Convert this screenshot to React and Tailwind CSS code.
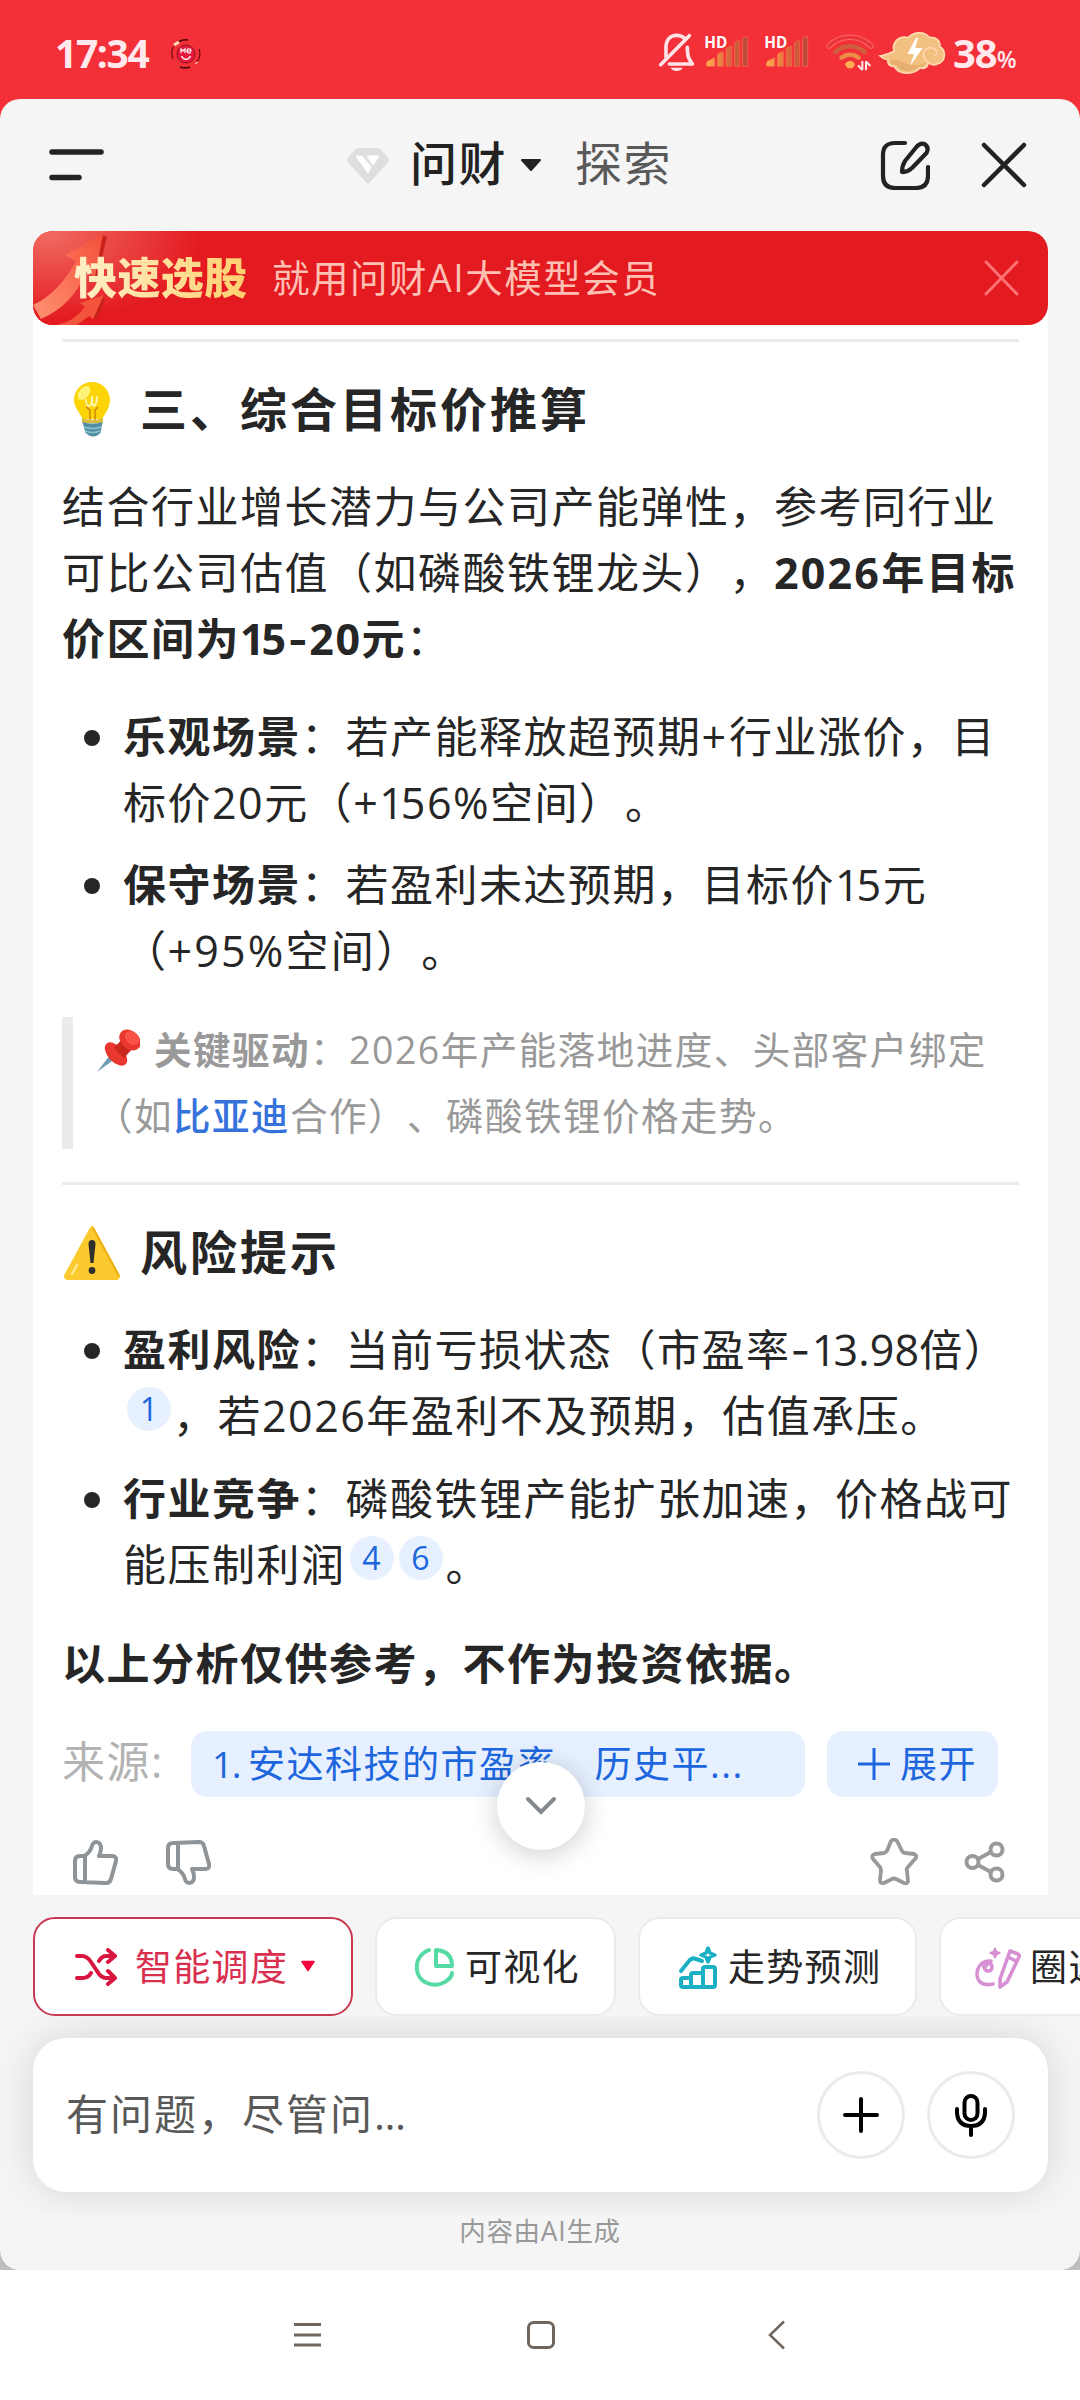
import React from "react";

const StatusBar = () => (
  <div className="flex h-[99px] items-start bg-[#f32f38] pt-5">
    <span className="ml-[55px] w-[95px] whitespace-nowrap text-[39px] font-bold leading-[65px] tracking-[-1.400px] text-[#ffe9ec]">
      17:34
    </span>
    <svg className="ml-[21px] mt-[19px]" width="30" height="30" viewBox="0 0 30 30" fill="none">
      <path d="M2 20A14 14 0 0 1 3 7" stroke="#7a1018" strokeWidth="1.3" />
      <path d="M8 2.5A14 14 0 0 1 17 1" stroke="#4a0a0a" strokeWidth="1.6" />
      <path d="M28 10A14 14 0 0 1 26 23" stroke="#7a1018" strokeWidth="1.3" />
      <path d="M9 28A14 14 0 0 0 19 28" stroke="#4a0a0a" strokeWidth="1.8" />
      <path d="M3 6l5-3" stroke="#ffe0b8" strokeWidth="3" />
      <path d="M24 25l3-2" stroke="#ffb8a8" strokeWidth="1.5" />
      <circle cx="15" cy="15" r="9" fill="#e8183c" stroke="#8f1424" strokeWidth="1" />
      <path d="M10 14v-4l2 2 2-2v4M16 12h4c0-3-4-3-4 0 0 2 2 2.500 4 1.500" stroke="#fff" strokeWidth="1.200" />
      <path d="M10.500 17c2 4.500 7 4.500 9 0" stroke="#fff" strokeWidth="1.300" />
    </svg>
    <svg className="ml-[449px]" width="310" height="70" viewBox="0 0 930 210" fill="none">
      <defs>
        <linearGradient id="bars" x1="0" x2="1">
          <stop offset="0" stopColor="#ffb04f" />
          <stop offset="0.5" stopColor="#dc6c3c" />
          <stop offset="1" stopColor="#b9473b" />
        </linearGradient>
      </defs>
      <g stroke="#ffe3e6" strokeWidth="11" strokeLinecap="round" strokeLinejoin="round">
        <path d="M48 112V82c0-24 15-36 31-36 11 0 19 3 25 9" />
        <path d="M112 82c0 28 4 34 15 50H58" />
        <path d="M32 134L118 47" />
      </g>
      <path d="M62 143h36c-6 13-30 13-36 0z" fill="#ffe3e6" />
      {[166, 346].map((x) => (
        <g key={x}>
          <text x={x - 3} y="83" fontSize="46" fontWeight="700" fill="#fff" fontFamily="Open Sans, sans-serif">
            HD
          </text>
          <g transform={`translate(${x} 0)`}>
            <path
              d="M3 131q0-8 10-11l15-7v26H7q-4 0-4-4zM36 139v-33q0-5 5-7l13-4v44zM62 139V89q0-5 5-7l12-4v61zM87 139V72q0-5 5-7l10-4v78zM111 139V58q0-5 5-6l11-4v91z"
              fill="url(#bars)"
              stroke="#ff6b4c"
              strokeWidth="2"
            />
          </g>
        </g>
      ))}
      <path d="M537 78c35-35 91-35 126 0" stroke="#ff6c67" strokeWidth="16" strokeLinecap="round" />
      <path d="M537 78c35-35 91-35 126 0" stroke="#ea343b" strokeWidth="11" strokeLinecap="round" />
      <path d="M556 96c26-23 62-23 88 0" stroke="#cf5f3c" strokeWidth="14" strokeLinecap="round" />
      <path d="M574 113c16-12 36-12 52 0" stroke="#ed8c45" strokeWidth="13" strokeLinecap="round" />
      <path d="M585 131q15-17 30 0-3 14-15 14t-15-14z" fill="#ffb056" />
      <path d="M637 123v27M637 150l-13-14M648 151v-28M648 124l13 14" stroke="#ffe9ec" strokeWidth="6" />
      <path
        d="M690 108c18-2 30-8 42-14-8-24 14-50 43-41 18-20 50-18 62-1 20-2 34 10 33 28 20 12 16 44-4 50-12 7-24 4-32-2 0 14-12 20-24 16-20 22-66 20-76-4-16 0-24-12-20-20-9-2-18-6-24-12z"
        fill="#f2c081"
        stroke="#ffdcb0"
        strokeWidth="5"
      />
      <path d="M716 116c10 8 26 2 38 8 18 10 46 18 72 4-4 10-14 14-23 12-18 20-52 16-62-4-13 0-19-7-18-14z" fill="#e6ae6d" />
      <path d="M836 128c-26-16-16-52 12-44 14 4 16 18 6 24" stroke="#ffdcb0" strokeWidth="4" />
      <path d="M798 54l-26 48h20l-12 36 38-54h-22l8-30z" fill="#fff" />
    </svg>
    <span className="-ml-[7px] whitespace-nowrap text-[40px] font-bold leading-[66px] tracking-[-1px] text-[#ffe9ec]">
      38<span className="text-[23px] font-semibold">%</span>
    </span>
  </div>
);

const Header = () => (
  <div className="flex h-[132px] items-center">
    <svg className="ml-[49px] mt-1" width="56" height="38" stroke="#232323" strokeWidth="5.500" strokeLinecap="round">
      <path d="M3 4h49M3 29.500h27" />
    </svg>
    <svg className="ml-[241px] mt-[2px]" width="44" height="38" viewBox="0 0 44 38">
      <path d="M12 4h20l8 9-18 20L4 13z" fill="#dedede" stroke="#dedede" strokeWidth="6" strokeLinejoin="round" />
      <path d="M10 9h6l9 11-3 6zM21 9h12l-6 9z" fill="#fff" stroke="#fff" strokeLinejoin="round" />
    </svg>
    <span className="-mt-1 ml-[20px] w-[96px] whitespace-nowrap text-[47px] font-medium leading-[60px] tracking-[1.500px] text-[#222]">
      问财
    </span>
    <svg className="ml-[14px] mt-[-1px]" width="22" height="14">
      <path d="M2 2h18l-9 10z" fill="#222" stroke="#222" strokeWidth="2" strokeLinejoin="round" />
    </svg>
    <span className="-mt-1 ml-[33px] w-[96px] whitespace-nowrap text-[47px] leading-[60px] tracking-[1.500px] text-[#595959]">
      探索
    </span>
    <svg
      className="ml-[209px]"
      width="50"
      height="50"
      viewBox="0 0 50 50"
      fill="none"
      stroke="#222"
      strokeWidth="4.200"
      strokeLinecap="round"
      strokeLinejoin="round"
    >
      <path d="M25 3H15Q3 3 3 15V36Q3 48 15 48H36Q48 48 48 36V27" />
      <path d="M36 7.500q4-5 8.500-3.500 5 3.500 2 9L32 28q-5 4.500-10 4 0-6 3-11z" />
    </svg>
    <svg className="ml-[51px]" width="46" height="46" stroke="#222" strokeWidth="4.500" strokeLinecap="round">
      <path d="M3 3l40 40M43 3L3 43" />
    </svg>
  </div>
);

const Banner = () => (
  <div className="ml-[33px] mr-[32px] h-[94px] bg-linear-to-b from-[#f5f5f5] from-50% to-white to-50%">
    <div className="relative flex h-[94px] items-center overflow-hidden rounded-[20px] bg-[#e31a20]">
      <svg className="absolute left-0 top-0" width="170" height="94">
        <defs>
          <radialGradient id="glow" cx="0.100" cy="0.050" r="0.900">
            <stop offset="0" stopColor="#f0695f" />
            <stop offset="1" stopColor="#e31a20" />
          </radialGradient>
          <linearGradient id="arrow" x1="0" x2="1" y1="1" y2="0">
            <stop offset="0" stopColor="#ff9273" />
            <stop offset="1" stopColor="#f4503a" />
          </linearGradient>
        </defs>
        <rect width="170" height="94" fill="url(#glow)" />
        <path d="M70 4l4 2-10 40-6-2zM66 64l6 4-8 20-6-2z" fill="#c9221d" />
        <path d="M0 74Q26 62 43 30L32 24 70 3 62 46l-9-5Q40 74 8 88z" fill="url(#arrow)" />
        <path d="M24 94Q42 90 52 76l-5-4 24-8-11 24-4-3-12 9z" fill="#f4543c" />
      </svg>
      <span className="relative ml-[41px] w-[176px] whitespace-nowrap bg-linear-to-r from-[#fff0c8] to-[#ffcf6b] bg-clip-text text-[43px] font-black leading-[60px] tracking-[0.400px] text-transparent">
        快速选股
      </span>
      <span className="ml-[22px] whitespace-nowrap text-[37.500px] leading-[60px] tracking-[1.500px] text-[#ffc0b4]">
        就用问财AI大模型会员
      </span>
      <svg className="ml-auto mr-[28px]" width="36" height="36" stroke="#ff7276" strokeWidth="3" strokeLinecap="round">
        <path d="M2 2l31 32M33 2L2 34" />
      </svg>
    </div>
  </div>
);

const Bulb = () => (
  <svg className="ml-[11px]" width="40" height="58" viewBox="0 0 40 58">
    <path d="M19 1c10 0 18 8 18 18 0 8-5 13-7.500 19H9.500C7 31 1 27 1 19 1 9 9 1 19 1z" fill="#fdd406" />
    <ellipse cx="11" cy="12" rx="5" ry="8" fill="#fff27a" transform="rotate(38 11 12)" />
    <path d="M13 18q0 7 3 7t3-10q0 10 2 10t3-10q0 10-4 10" fill="none" stroke="#fff6b0" strokeWidth="1.800" />
    <path d="M13 26l4 3v10M25 26l-3 3v10" fill="none" stroke="#cf8b10" strokeWidth="1.600" />
    <path d="M9 37q10 4 21 0v5H9z" fill="#d9bd3c" />
    <path d="M9.500 41q10 3 20 0l-2 11q-7 7-15 0z" fill="#4f8ea3" />
    <path d="M11 46q9 3 17 0M12 50q8 3 15 0" stroke="#8cc0cd" strokeWidth="1.500" fill="none" />
  </svg>
);

const Warning = () => (
  <svg className="ml-[1px]" width="58" height="58" viewBox="0 0 58 58">
    <path d="M29 4L55 52q0 2-2 2H5q-2 0-2-2z" fill="#fcc92f" stroke="#fcc92f" strokeWidth="4" strokeLinejoin="round" />
    <path d="M30 4L56 52" stroke="#efae10" strokeWidth="2" />
    <path d="M9 50l5-9" stroke="#ffe98a" strokeWidth="2.500" strokeLinecap="round" />
    <path d="M25.500 20q0-4 3.500-4t3.500 4l-2 19h-3z" fill="#2f2f2f" />
    <circle cx="29" cy="46.500" r="3.400" fill="#2f2f2f" />
  </svg>
);

const Pin = () => (
  <svg className="-ml-[2px] mr-[14px]" width="45" height="45" viewBox="0 0 45 45">
    <path d="M15 27l5 4L2 44z" fill="#6f9eb5" />
    <ellipse cx="21" cy="26" rx="14" ry="8" transform="rotate(47 21 26)" fill="#e8382f" />
    <path d="M19 20l10-11 10 10-10 11z" fill="#c9281f" />
    <ellipse cx="35" cy="12" rx="12" ry="9" transform="rotate(42 35 12)" fill="#e8382f" />
    <ellipse cx="37" cy="10" rx="8" ry="6" transform="rotate(42 37 10)" fill="#fb5247" />
  </svg>
);

const Cite = ({ n }) => (
  <span className="mr-[5px] inline-block size-[44px] -translate-y-[11px] rounded-full bg-[#e6f0ff] text-center text-[32px] leading-[43px] tracking-normal text-[#1d66dd]">
    {n}
  </span>
);

const Dash = () => <span className="font-['Inter']">-</span>;

const One = () => <span className="tracking-[-3px]">1</span>;

const Line = ({ children }) => <span className="block h-[66px] whitespace-nowrap">{children}</span>;

const Item = ({ children }) => (
  <li className="flex">
    <span className="ml-[22px] mt-[26px] size-4 shrink-0 rounded-full bg-[#262626]" />
    <div className="ml-[23px]">{children}</div>
  </li>
);

const Heading = ({ icon, children }) => (
  <div className="flex h-[66px] items-center">
    <div className="w-[78px]">{icon}</div>
    <h2 className="-mt-[3px] whitespace-nowrap text-[47px] font-semibold tracking-[3px]">{children}</h2>
  </div>
);

const Answer = () => (
  <div className="ml-[33px] mr-[32px] h-[1570px] overflow-hidden bg-white px-[29px] pt-[14px] text-[43px] leading-[66px] tracking-[1.500px] text-[#262626]">
    <div className="h-[3px] bg-[#ebebeb]" />
    <div className="mt-[35px]">
      <Heading icon={<Bulb />}>三、综合目标价推算</Heading>
    </div>
    <p className="mt-[31px]">
      <Line>结合行业增长潜力与公司产能弹性，参考同行业</Line>
      <Line>
        可比公司估值（如磷酸铁锂龙头），<b className="tracking-[2.200px]">2026年目标</b>
      </Line>
      <Line>
        <b>
          价区间为
          <One />5<Dash />
          20元
        </b>
        ：
      </Line>
    </p>
    <ul className="mt-[32px] flex flex-col gap-4">
      <Item>
        <Line>
          <b>乐观场景</b>：若产能释放超预期<span className="tracking-[3px]">+</span>行业涨价，目
        </Line>
        <Line>
          标价20元（+
          <One />
          56%空间<span className="tracking-[3px]">）</span>。
        </Line>
      </Item>
      <Item>
        <Line>
          <b>保守场景</b>：若盈利未达预期，目标价
          <One />
          5元
        </Line>
        <Line>
          （<span className="tracking-[2.200px]">+95%空间）</span>。
        </Line>
      </Item>
    </ul>
    <blockquote className="mt-[33px] border-l-[11px] border-[#ebebeb] pl-6 text-[37.500px] text-[#999]">
      <span className="flex h-[66px] items-center whitespace-nowrap">
        <Pin />
        <b>关键驱动</b>：2026年产能落地进度、头部客户绑定
      </span>
      <span className="-ml-[2px] block h-[66px] whitespace-nowrap">
        （如<span className="font-medium text-[#3672dc]">比亚迪</span>合作）、磷酸铁锂价格走势。
      </span>
    </blockquote>
    <div className="mt-[33px] h-[3px] bg-[#ebebeb]" />
    <div className="mt-[35px]">
      <Heading icon={<Warning />}>风险提示</Heading>
    </div>
    <ul className="mt-[31px] flex flex-col gap-[17px]">
      <Item>
        <Line>
          <b>盈利风险</b>：当前亏损状态（市盈率
          <Dash />
          <One />
          <span className="tracking-[0.200px]">3.98</span>倍）
        </Line>
        <Line>
          <span className="inline-block w-1" />
          <Cite n={1} />
          <span className="-ml-[3px]">，若2026年盈利不及预期，估值承压。</span>
        </Line>
      </Item>
      <Item>
        <Line>
          <b>行业竞争</b>：磷酸铁锂产能扩张加速，价格战可
        </Line>
        <Line>
          能压制利润
          <span className="inline-block w-1" />
          <Cite n={4} />
          <Cite n={6} />
          <span className="-ml-[2px]">。</span>
        </Line>
      </Item>
    </ul>
    <p className="mt-[33px] h-[66px] whitespace-nowrap font-bold">以上分析仅供参考，不作为投资依据。</p>

    <div className="mt-[34px] flex h-[66px]">
      <span className="-mt-[2px] w-[129px] text-[#b3b3b3]">来源:</span>
      <span className="w-[614px] whitespace-nowrap rounded-2xl bg-[#e6f0ff] pl-[21px] text-[37px] text-[#1d66dd]">
        <span className="tracking-[-1.500px]">1. </span>安达科技的市盈率　历史平...
      </span>
      <span className="ml-[22px] flex w-[171px] items-center whitespace-nowrap rounded-2xl bg-[#e6f0ff] pl-[30px] text-[37px] text-[#1d66dd]">
        <svg className="mr-[9px]" width="34" height="34" stroke="#1d66dd" strokeWidth="3">
          <path d="M17 1v32M1 17h32" />
        </svg>
        展开
      </span>
    </div>

    <div className="mt-[38px] flex h-[54px] items-center">
      <svg className="ml-[10px]" width="46" height="48" viewBox="0 0 46 48" fill="none" stroke="#8f9499" strokeWidth="4" strokeLinejoin="round">
        <path d="M12 18q6-3 8-10c1-6 9-5 9 2 0 4-1 6-2 8h13q5 0 4 5l-5 18q-1 4-5 4L8 44q-5 0-5-5V23q0-5 5-5zM13 18v26" />
      </svg>
      <svg className="ml-[47px]" width="46" height="48" viewBox="0 0 46 48" fill="none" stroke="#8f9499" strokeWidth="4" strokeLinejoin="round">
        <path d="M12 31q6 3 8 10c1 6 9 5 9-2 0-4-1-6-2-8h13q5 0 4-5L39 8q-1-4-5-4L8 5Q3 5 3 10v16q0 5 5 5zM13 31V5" />
      </svg>
      <svg className="ml-auto" width="48" height="48" viewBox="0 0 48 48" fill="none" stroke="#999" strokeWidth="3.800" strokeLinejoin="round">
        <path d="M21 3q3-3 6 0l5 10q1 2 3 2l9 1q4 2 1 5l-7 8q-2 2-1 4l1 10q0 3-4 2l-8-4q-2-1-4 0l-8 4q-4 1-4-3l1-9q0-2-1-4l-7-8q-2-4 2-5l9-1q2-1 3-2z" />
      </svg>
      <svg className="ml-[46px] mr-[13px]" width="42" height="42" viewBox="0 0 42 42" fill="none" stroke="#999" strokeWidth="4">
        <circle cx="8.500" cy="21" r="6" />
        <circle cx="32.500" cy="8.500" r="6" />
        <circle cx="32.500" cy="33.500" r="6" />
        <path d="M14 18l13-7M14 24l13 7" />
      </svg>
    </div>
  </div>
);

const ShuffleIcon = () => (
  <svg width="42" height="38" viewBox="0 0 42 38" fill="none" stroke="#d9163f" strokeWidth="4" strokeLinecap="round" strokeLinejoin="round">
    <path d="M2 8h5q5 0 9 6l6 9q4 7 9 7h8M2 30h6q5 0 8-5M24 13q3-5 7-5h8M33 2l7 6-7 6M33 23l7 7-7 6" />
  </svg>
);

const PieIcon = () => (
  <svg width="40" height="40" viewBox="0 0 40 40" fill="none" stroke="#55d9a5" strokeWidth="4" strokeLinecap="round" strokeLinejoin="round">
    <path d="M14 3C-2 9-2 30 12 36s25-5 25-10" />
    <path d="M21 3v16h16Q37 4 21 3z" />
  </svg>
);

const TrendIcon = () => (
  <svg width="40" height="44" viewBox="0 0 40 44" fill="none" stroke="#1cb0c4" strokeWidth="4" strokeLinecap="round" strokeLinejoin="round">
    <path d="M3 26l8-10q3-4 7-2l6 2" />
    <path d="M3 35q0-2 2-2h8v-3q0-2 2-2h10v-4q0-2 2-2h8q2 0 2 2v16q0 2-2 2H5q-2 0-2-2zM13 33v9M25 28v14" />
    <path d="M30 3l2 5 5 2-5 2-2 5-2-5-5-2 5-2z" strokeWidth="3.500" />
  </svg>
);

const CircleIcon = () => (
  <svg width="46" height="44" viewBox="0 0 46 44" fill="none" stroke="#d78fd4" strokeWidth="3.600" strokeLinecap="round" strokeLinejoin="round">
    <path d="M16 16C2 15-1 31 5 37q5 4 13 2M9 20c-1 7 8 8 8 2 0-4-5-5-6-1" />
    <path d="M35 6l8 3q2 1 1 3L32 37l-7 5V34zM33 12l8 4" />
    <path d="M20 3l1.500 3.500L25 8l-3.500 1.500L20 13l-1.500-3.500L15 8l3.500-1.500z" fill="#d78fd4" strokeWidth="1.500" />
  </svg>
);

const chip =
  "flex h-[99px] shrink-0 items-center whitespace-nowrap rounded-[22px] border-2 bg-white text-[37px] leading-[60px] tracking-[1.300px]";

const Chips = () => (
  <div className="mt-[22px] flex h-[99px] gap-[22px] overflow-hidden pl-[33px]">
    <div className={`${chip} w-[320px] border-[#c93a52] pl-[40px] text-[#d9304f]`}>
      <ShuffleIcon />
      <span className="ml-[18px]">智能调度</span>
      <svg className="ml-[12px]" width="16" height="13">
        <path d="M2 1.500h12l-6 9z" fill="#f5003c" stroke="#f5003c" strokeWidth="1.500" strokeLinejoin="round" />
      </svg>
    </div>
    <div className={`${chip} w-[241px] border-[#ebebeb] pl-[38px] text-[#262626]`}>
      <PieIcon />
      <span className="ml-[10px]">可视化</span>
    </div>
    <div className={`${chip} w-[279px] border-[#ebebeb] pl-[38px] text-[#262626]`}>
      <TrendIcon />
      <span className="ml-[10px]">走势预测</span>
    </div>
    <div className={`${chip} w-[200px] border-[#ebebeb] pl-[34px] text-[#262626]`}>
      <CircleIcon />
      <span className="ml-[9px]">圈选</span>
    </div>
  </div>
);

const InputBar = () => (
  <div className="h-[198px] overflow-hidden pl-[33px] pr-[32px] pt-[22px]">
    <div className="flex h-[154px] items-center rounded-[33px] bg-white pl-[33px] pr-[33px] shadow-[0_0_40px_rgba(0,0,0,0.13)]">
      <span className="-mt-[2px] whitespace-nowrap text-[42px] leading-[66px] tracking-[2px] text-[#595959]">
        有问题，尽管问<span className="tracking-[-0.500px]">...</span>
      </span>
      <div className="ml-auto flex size-[88px] items-center justify-center rounded-full border-[3px] border-[#ebebeb]">
        <svg width="36" height="36" stroke="#000" strokeWidth="4" strokeLinecap="round">
          <path d="M18 2v32M2 18h32" />
        </svg>
      </div>
      <div className="ml-[22px] flex size-[88px] items-center justify-center rounded-full border-[3px] border-[#ebebeb]">
        <svg width="34" height="44" viewBox="0 0 34 44" fill="none" stroke="#000" strokeWidth="4" strokeLinecap="round">
          <rect x="10.500" y="3" width="13" height="24" rx="6.500" />
          <path d="M3 16v4q1 13 14 13t14-13v-4M17 33v9" />
        </svg>
      </div>
    </div>
  </div>
);

const NavBar = () => (
  <div className="flex h-[130px] items-center bg-white text-[#71665e]">
    <svg className="ml-[293px]" width="30" height="30" stroke="currentColor" strokeWidth="3">
      <path d="M1 4.500h27M1 15h27M1 25h27" />
    </svg>
    <svg className="ml-[203px]" width="30" height="30" fill="none" stroke="currentColor" strokeWidth="3">
      <rect x="2.500" y="2.500" width="25" height="25" rx="5" />
    </svg>
    <svg className="ml-[211px]" width="20" height="30" fill="none" stroke="currentColor" strokeWidth="2.500">
      <path d="M17 1.500L3 15l14 13.500" />
    </svg>
  </div>
);

const App = () => (
  <div
    lang="zh-CN"
    className="h-[2400px] w-[1080px] overflow-hidden bg-white font-['Open_Sans','Noto_Sans_CJK_SC',sans-serif] [text-spacing-trim:space-all]"
  >
    <StatusBar />
    <div className="bg-linear-to-b from-[#f32f38] from-50% to-[#bdbdbd] to-50%">
      <div className="relative h-[2171px] rounded-[20px] bg-[#f5f5f5]">
        <Header />
        <Banner />
        <Answer />
        <Chips />
        <InputBar />
        <p className="-mt-px text-center text-[26.500px] leading-[36px] tracking-[0.700px] text-[#999]">内容由AI生成</p>
        {/* jump to latest */}
        <div className="absolute left-[497px] top-[1663px] flex size-[88px] items-center justify-center rounded-full bg-white shadow-[0_4px_28px_rgba(0,0,0,0.2)]">
          <svg width="32" height="20" fill="none" stroke="#85888f" strokeWidth="4" strokeLinecap="round">
            <path d="M3 3l13 13L29 3" />
          </svg>
        </div>
      </div>
    </div>
    <NavBar />
  </div>
);

export default App;
